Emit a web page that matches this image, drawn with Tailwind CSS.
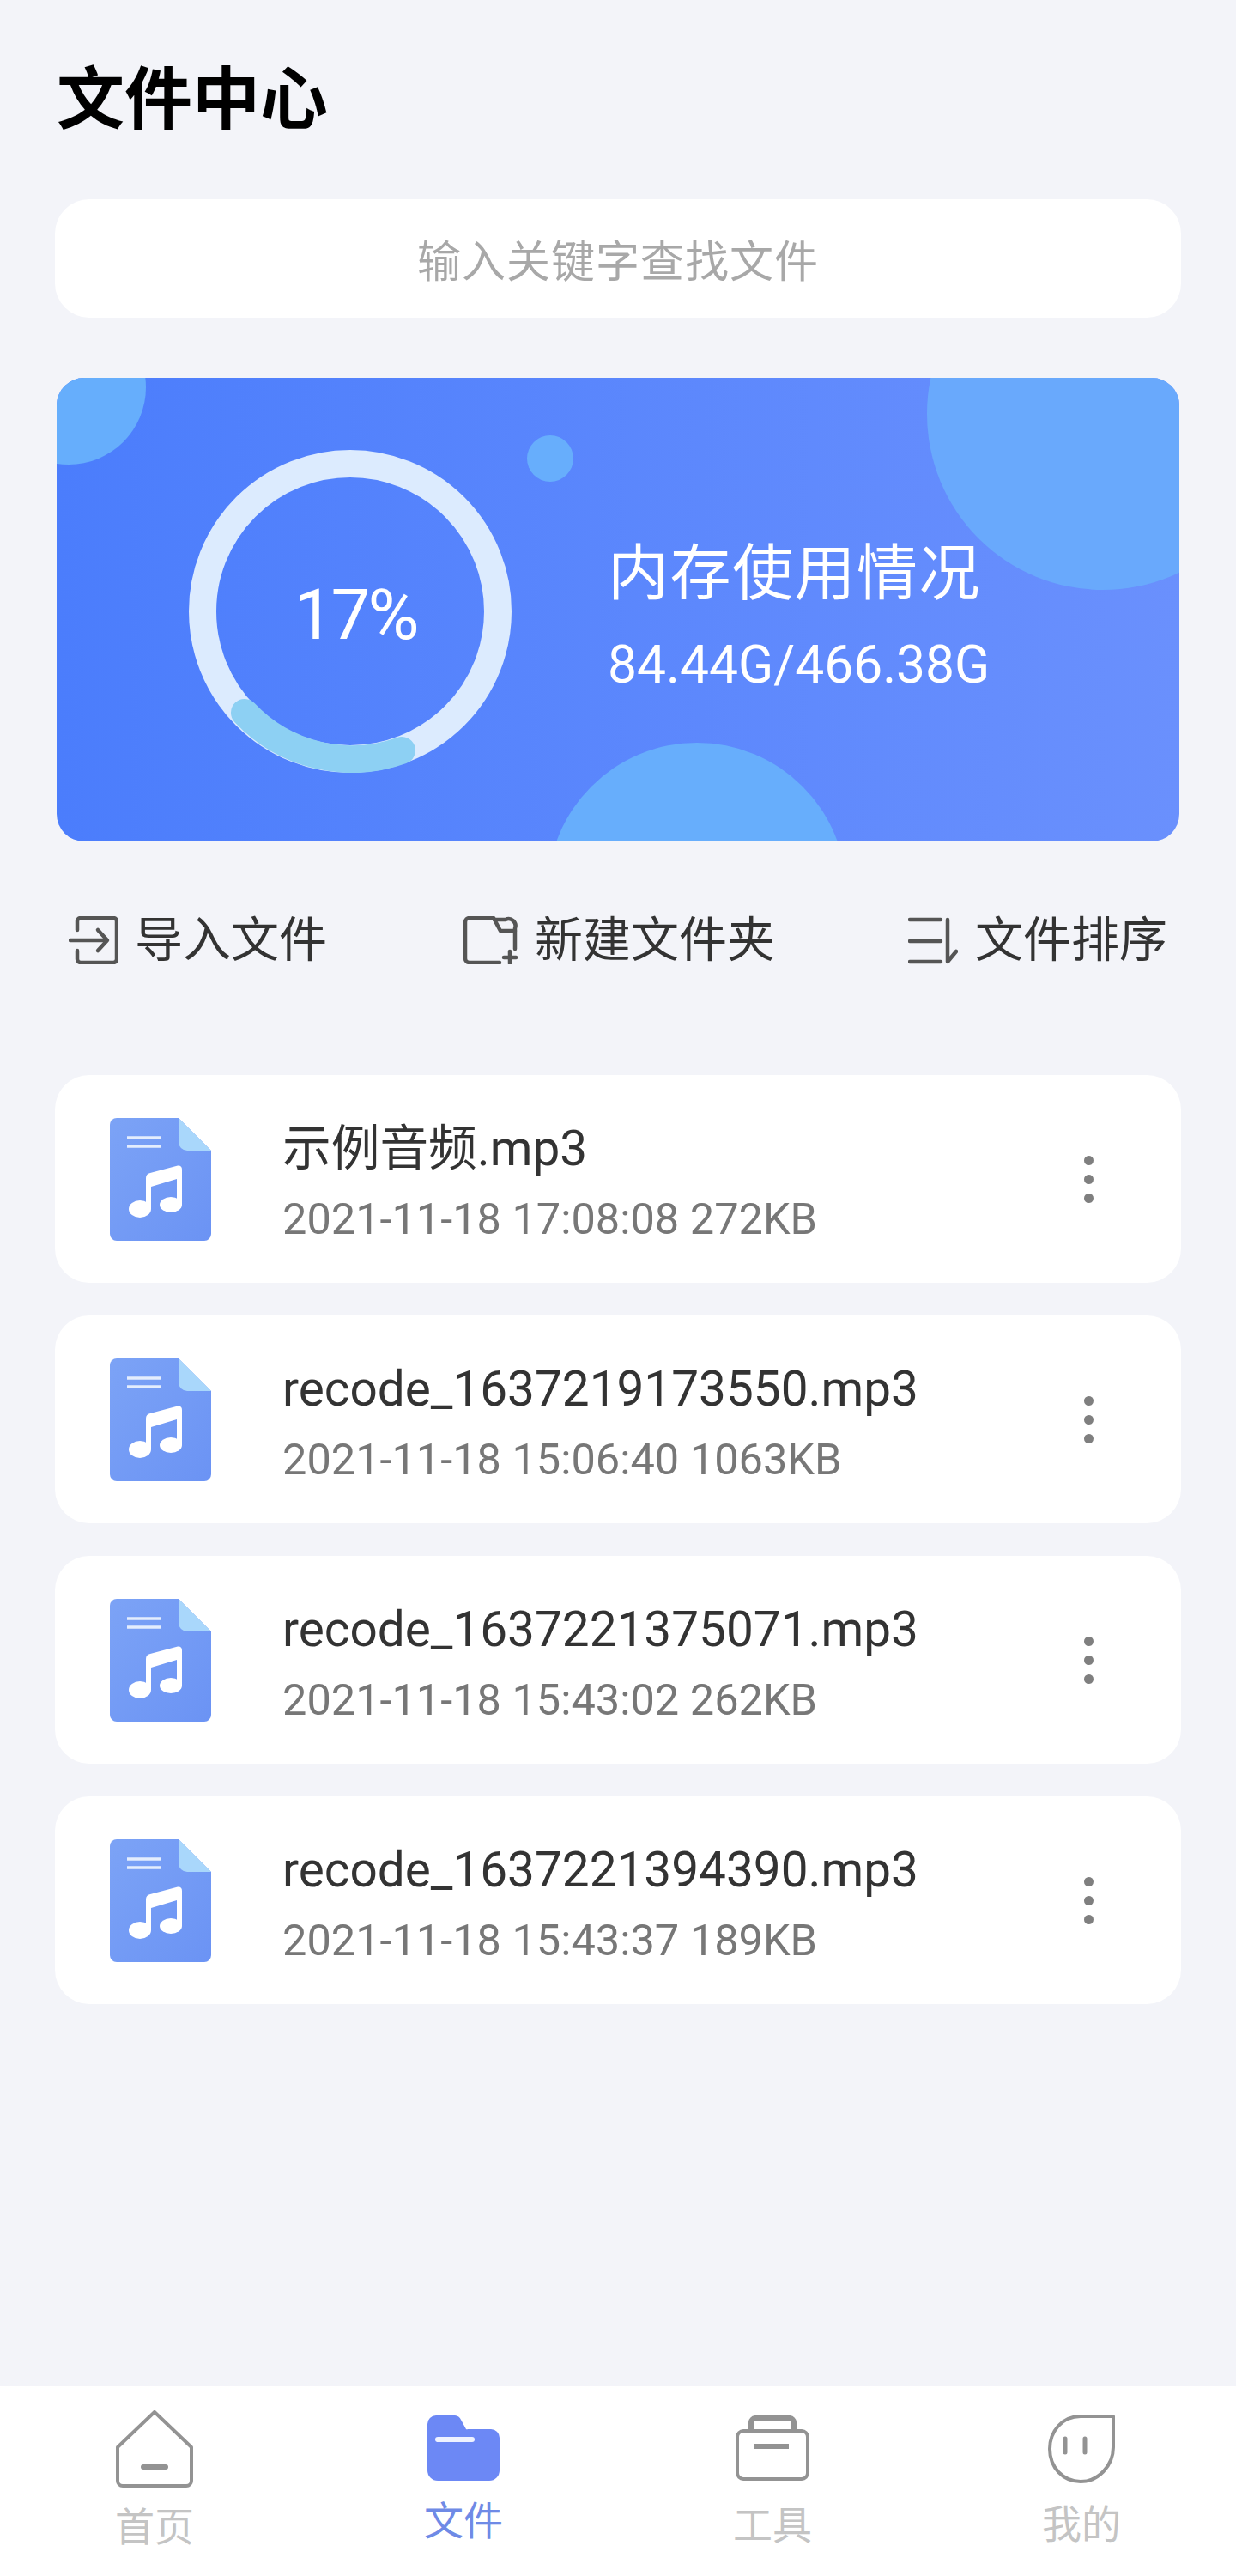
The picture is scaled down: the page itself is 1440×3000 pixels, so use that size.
<!DOCTYPE html>
<html lang="zh-CN">

<head>
    <meta charset="UTF-8">
    <meta name="viewport" content="width=device-width, initial-scale=1.0">
    <title>文件中心</title>
    <script src="https://cdn.jsdelivr.net/npm/@tailwindcss/browser@4"></script>
</head>

<body class="bg-[#f3f4f9] font-['Roboto','Noto_Sans_CJK_SC',sans-serif]">
    <div class="w-[1440px] h-[3000px] flex flex-col">

        <!-- Header -->
        <h1 class="pl-[66px] pt-[70px] text-[79px] leading-[94px] font-bold text-black">文件中心</h1>

        <!-- Search -->
        <div class="mx-[64px] mt-[68px] h-[138px] pt-[10px] rounded-[40px] bg-white flex items-center justify-center text-[51px] text-[#a8a8a8] tracking-[1px]">
            输入关键字查找文件
        </div>

        <!-- Storage card -->
        <div class="relative mx-[66px] mt-[70px] h-[540px] rounded-[32px] overflow-hidden bg-gradient-to-r from-[#4b7dfc] to-[#6a90fd] flex items-center text-white">
            <div class="absolute left-[-76px] top-[-79px] w-[180px] h-[180px] rounded-full bg-[#66aefc]"></div>
            <div class="absolute left-[1014px] top-[-163px] w-[410px] h-[410px] rounded-full bg-[#69a9fc]"></div>
            <div class="absolute left-[572px] top-[425px] w-[348px] h-[348px] rounded-full bg-[#67aefc]"></div>
            <div class="absolute left-[548px] top-[67px] w-[54px] h-[54px] rounded-full bg-[#67aefc]"></div>

            <div class="relative ml-[154px] mt-[3px] w-[376px] h-[376px] flex items-center justify-center">
                <svg class="absolute inset-0" width="376" height="376" viewBox="0 0 376 376" fill="none">
                    <circle cx="188" cy="188" r="172" stroke="#dcebfe" stroke-width="32"/>
                    <path d="M65 306 A172 172 0 0 0 248 350" stroke="#8dd0f3" stroke-width="32" stroke-linecap="round"/>
                </svg>
                <span class="relative text-[82px] tracking-[-3px] ml-[12px] mt-[10px]">17%</span>
            </div>

            <div class="relative ml-[112px] flex flex-col">
                <span class="text-[71px] leading-[84px] tracking-[1.5px] pt-[16px]">内存使用情况</span>
                <span class="mt-[30px] text-[60.5px] leading-[70px]">84.44G/466.38G</span>
            </div>
        </div>

        <!-- Actions -->
        <div class="mt-[80px] h-[70px] pl-[80px] pr-[80px] flex items-center justify-between text-[56px] text-[#333]">
            <div class="flex items-center gap-[19px]">
                <svg width="58" height="56" viewBox="0 0 58 56" fill="none" stroke="#555" stroke-width="4.5" stroke-linecap="round" stroke-linejoin="round">
                    <path d="M10 16V6a4 4 0 0 1 4-4h38a4 4 0 0 1 4 4v44a4 4 0 0 1-4 4H14a4 4 0 0 1-4-4V40"/>
                    <path d="M2 28h42"/>
                    <path d="M34 16l11 12-11 12"/>
                </svg>
                <span>导入文件</span>
            </div>
            <div class="flex items-center gap-[20px] ml-[3px]">
                <svg width="64" height="56" viewBox="0 0 64 56" fill="none" stroke="#555" stroke-width="4.5" stroke-linecap="round" stroke-linejoin="round">
                    <path d="M43 54H8a5 5 0 0 1-5-5V7a5 5 0 0 1 5-5h28l8 15h17"/>
                    <path d="M37 4h13a8 8 0 0 1 11 10v24"/>
                    <path d="M48 48h14M55 41v14"/>
                </svg>
                <span>新建文件夹</span>
            </div>
            <div class="flex items-center gap-[20px]">
                <svg width="58" height="56" viewBox="0 0 58 56" fill="none" stroke="#555" stroke-width="4.5" stroke-linecap="round" stroke-linejoin="round">
                    <path d="M2 4h36M2 29h36M2 53h36"/>
                    <path d="M46 4v49l10-12"/>
                </svg>
                <span>文件排序</span>
            </div>
        </div>

        <!-- File list -->
        <div class="mt-[122px] mx-[64px] flex flex-col gap-[38px]">
            <div class="h-[242px] rounded-[40px] bg-white flex items-center pl-[64px] pr-[102px]">
                <svg width="118" height="143" viewBox="0 0 118 143" class="shrink-0">
                    <defs>
                        <linearGradient id="doc" x1="0" y1="0" x2="1" y2="1">
                            <stop offset="0" stop-color="#7ca3f6"/>
                            <stop offset="1" stop-color="#6b93f4"/>
                        </linearGradient>
                    </defs>
                    <path d="M8 0H80L118 38V135a8 8 0 0 1-8 8H8a8 8 0 0 1-8-8V8a8 8 0 0 1 8-8z" fill="url(#doc)"/>
                    <path d="M80 0L118 38H90a10 10 0 0 1-10-10z" fill="#a9d7fb"/>
                    <path d="M20 23H59M20 33H59" stroke="#e4edfd" stroke-width="3.5"/>
                    <path d="M42 106V70Q42 65 47 64L79 55.5Q84 55 84 60V101H78V71L48 80V106z" fill="#fff"/>
                    <ellipse cx="35" cy="106" rx="13" ry="10" fill="#fff"/>
                    <ellipse cx="71" cy="101" rx="13" ry="9" fill="#fff"/>
                </svg>
                <div class="ml-[83px] flex-1 pt-[8px]">
                    <div class="text-[56.7px] leading-[72px] text-[#333]">示例音频.mp3</div>
                    <div class="mt-[14px] text-[50.5px] leading-[64px] text-[#777]">2021-11-18 17:08:08 272KB</div>
                </div>
                <div class="flex flex-col gap-[11px]">
                    <span class="w-[11px] h-[11px] rounded-full bg-[#7f7f7f]"></span>
                    <span class="w-[11px] h-[11px] rounded-full bg-[#7f7f7f]"></span>
                    <span class="w-[11px] h-[11px] rounded-full bg-[#7f7f7f]"></span>
                </div>
            </div>

            <div class="h-[242px] rounded-[40px] bg-white flex items-center pl-[64px] pr-[102px]">
                <svg width="118" height="143" viewBox="0 0 118 143" class="shrink-0">
                    <path d="M8 0H80L118 38V135a8 8 0 0 1-8 8H8a8 8 0 0 1-8-8V8a8 8 0 0 1 8-8z" fill="url(#doc)"/>
                    <path d="M80 0L118 38H90a10 10 0 0 1-10-10z" fill="#a9d7fb"/>
                    <path d="M20 23H59M20 33H59" stroke="#e4edfd" stroke-width="3.5"/>
                    <path d="M42 106V70Q42 65 47 64L79 55.5Q84 55 84 60V101H78V71L48 80V106z" fill="#fff"/>
                    <ellipse cx="35" cy="106" rx="13" ry="10" fill="#fff"/>
                    <ellipse cx="71" cy="101" rx="13" ry="9" fill="#fff"/>
                </svg>
                <div class="ml-[83px] flex-1 pt-[8px]">
                    <div class="text-[56.7px] leading-[72px] text-[#333]">recode_1637219173550.mp3</div>
                    <div class="mt-[14px] text-[50.5px] leading-[64px] text-[#777]">2021-11-18 15:06:40 1063KB</div>
                </div>
                <div class="flex flex-col gap-[11px]">
                    <span class="w-[11px] h-[11px] rounded-full bg-[#7f7f7f]"></span>
                    <span class="w-[11px] h-[11px] rounded-full bg-[#7f7f7f]"></span>
                    <span class="w-[11px] h-[11px] rounded-full bg-[#7f7f7f]"></span>
                </div>
            </div>

            <div class="h-[242px] rounded-[40px] bg-white flex items-center pl-[64px] pr-[102px]">
                <svg width="118" height="143" viewBox="0 0 118 143" class="shrink-0">
                    <path d="M8 0H80L118 38V135a8 8 0 0 1-8 8H8a8 8 0 0 1-8-8V8a8 8 0 0 1 8-8z" fill="url(#doc)"/>
                    <path d="M80 0L118 38H90a10 10 0 0 1-10-10z" fill="#a9d7fb"/>
                    <path d="M20 23H59M20 33H59" stroke="#e4edfd" stroke-width="3.5"/>
                    <path d="M42 106V70Q42 65 47 64L79 55.5Q84 55 84 60V101H78V71L48 80V106z" fill="#fff"/>
                    <ellipse cx="35" cy="106" rx="13" ry="10" fill="#fff"/>
                    <ellipse cx="71" cy="101" rx="13" ry="9" fill="#fff"/>
                </svg>
                <div class="ml-[83px] flex-1 pt-[8px]">
                    <div class="text-[56.7px] leading-[72px] text-[#333]">recode_1637221375071.mp3</div>
                    <div class="mt-[14px] text-[50.5px] leading-[64px] text-[#777]">2021-11-18 15:43:02 262KB</div>
                </div>
                <div class="flex flex-col gap-[11px]">
                    <span class="w-[11px] h-[11px] rounded-full bg-[#7f7f7f]"></span>
                    <span class="w-[11px] h-[11px] rounded-full bg-[#7f7f7f]"></span>
                    <span class="w-[11px] h-[11px] rounded-full bg-[#7f7f7f]"></span>
                </div>
            </div>

            <div class="h-[242px] rounded-[40px] bg-white flex items-center pl-[64px] pr-[102px]">
                <svg width="118" height="143" viewBox="0 0 118 143" class="shrink-0">
                    <path d="M8 0H80L118 38V135a8 8 0 0 1-8 8H8a8 8 0 0 1-8-8V8a8 8 0 0 1 8-8z" fill="url(#doc)"/>
                    <path d="M80 0L118 38H90a10 10 0 0 1-10-10z" fill="#a9d7fb"/>
                    <path d="M20 23H59M20 33H59" stroke="#e4edfd" stroke-width="3.5"/>
                    <path d="M42 106V70Q42 65 47 64L79 55.5Q84 55 84 60V101H78V71L48 80V106z" fill="#fff"/>
                    <ellipse cx="35" cy="106" rx="13" ry="10" fill="#fff"/>
                    <ellipse cx="71" cy="101" rx="13" ry="9" fill="#fff"/>
                </svg>
                <div class="ml-[83px] flex-1 pt-[8px]">
                    <div class="text-[56.7px] leading-[72px] text-[#333]">recode_1637221394390.mp3</div>
                    <div class="mt-[14px] text-[50.5px] leading-[64px] text-[#777]">2021-11-18 15:43:37 189KB</div>
                </div>
                <div class="flex flex-col gap-[11px]">
                    <span class="w-[11px] h-[11px] rounded-full bg-[#7f7f7f]"></span>
                    <span class="w-[11px] h-[11px] rounded-full bg-[#7f7f7f]"></span>
                    <span class="w-[11px] h-[11px] rounded-full bg-[#7f7f7f]"></span>
                </div>
            </div>
        </div>

        <!-- Tab bar -->
        <div class="mt-auto h-[221px] bg-white grid grid-cols-4 text-[46px] leading-[54px] text-[#c4c4c4]">
            <div class="flex flex-col items-center pt-[28px]">
                <svg width="90" height="90" viewBox="0 0 90 90" fill="none" stroke="#939393" stroke-width="4" stroke-linejoin="round">
                    <path d="M45 2L88 43V82a6 6 0 0 1-6 6H8a6 6 0 0 1-6-6V43z"/>
                    <path d="M32 66H58" stroke-width="6" stroke-linecap="round"/>
                </svg>
                <span class="mt-[19px]">首页</span>
            </div>
            <div class="flex flex-col items-center pt-[34px] text-[#6f8ae6]">
                <svg width="84" height="76" viewBox="0 0 84 76">
                    <path d="M10 0H32a8 8 0 0 1 7 5l6 11a2 2 0 0 0 2 0H74a10 10 0 0 1 10 10V64a12 12 0 0 1-12 12H12A12 12 0 0 1 0 64V10A10 10 0 0 1 10 0z" fill="#6c88f5"/>
                    <path d="M12 28H52" stroke="#eef2ff" stroke-width="6" stroke-linecap="round"/>
                </svg>
                <span class="mt-[20px]">文件</span>
            </div>
            <div class="flex flex-col items-center pt-[34px]">
                <svg width="86" height="76" viewBox="0 0 86 76" fill="none" stroke="#939393" stroke-width="4">
                    <rect x="2" y="18" width="82" height="56" rx="7"/>
                    <path d="M18 18V8a6 6 0 0 1 5-5H63a6 6 0 0 1 5 5V18" stroke-width="6"/>
                    <path d="M22 36H62" stroke-width="6"/>
                </svg>
                <span class="mt-[25px]">工具</span>
            </div>
            <div class="flex flex-col items-center pt-[33px]">
                <svg width="78" height="80" viewBox="0 0 78 80" fill="none" stroke="#939393" stroke-width="4" stroke-linejoin="round">
                    <path d="M76 2H38C16 2 2 20 2 40c0 22 16 38 36 38s38-18 38-40z"/>
                    <path d="M20 28V44M43 28V44" stroke-width="5" stroke-linecap="round"/>
                </svg>
                <span class="mt-[21px]">我的</span>
            </div>
        </div>
    </div>
</body>

</html>
